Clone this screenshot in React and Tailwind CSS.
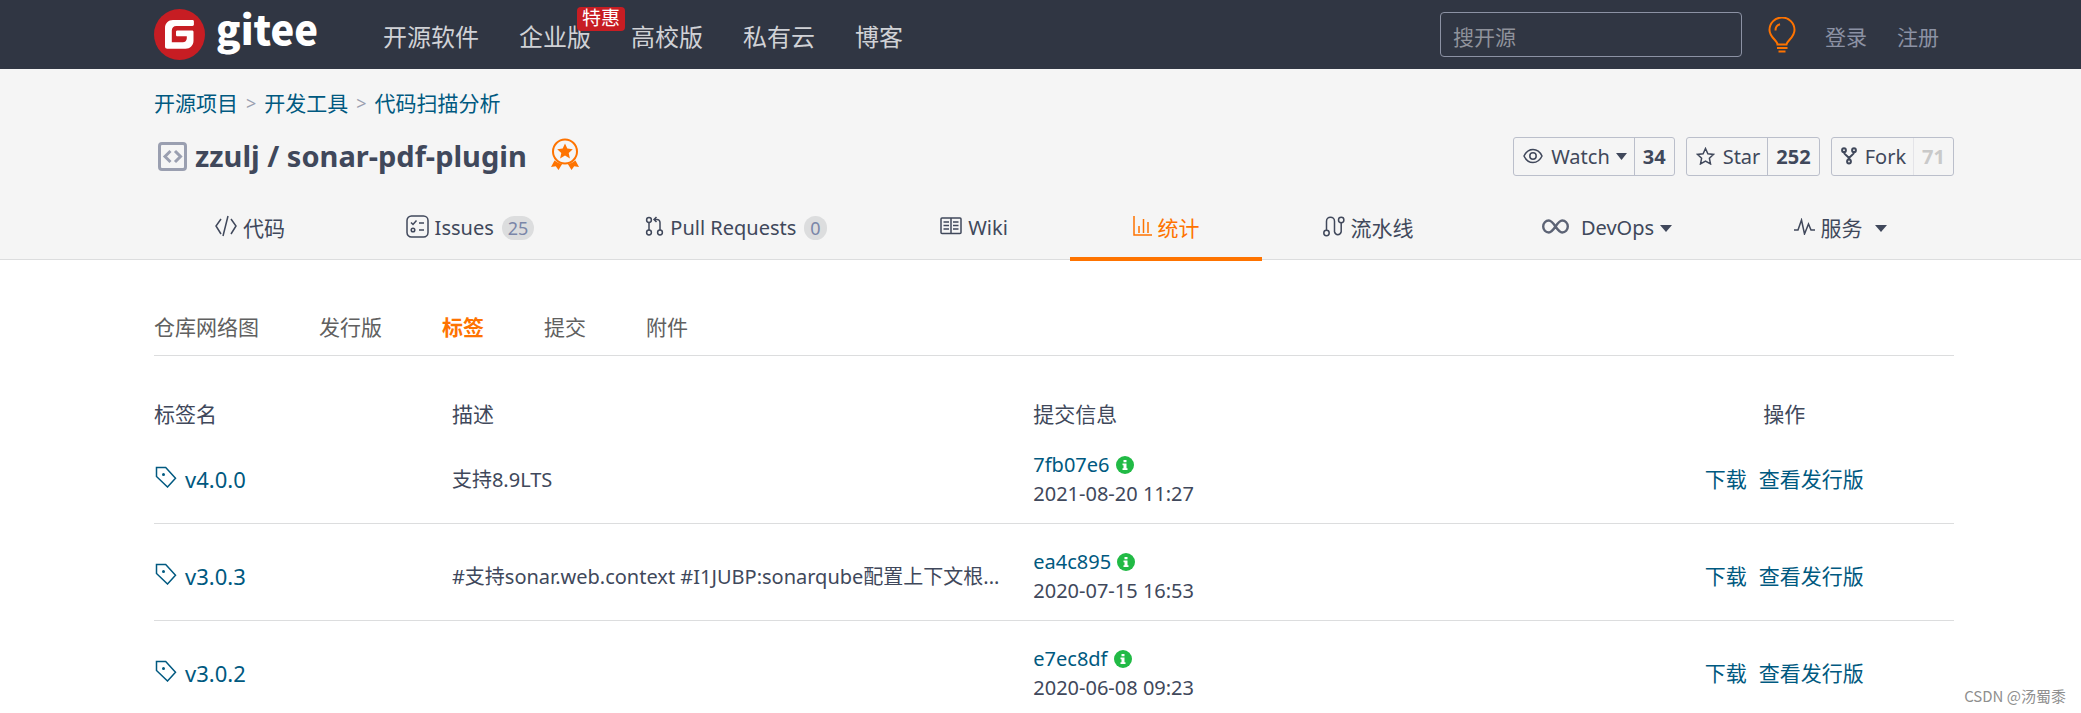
const LATIN = "font-['Noto_Sans','Noto_Sans_CJK_SC',sans-serif]";

function Icon({ w, h, box, sw = 1.5, className = '', children }) {
  return (
    <svg
      width={w}
      height={h}
      viewBox={box || `0 0 ${w} ${h}`}
      fill="none"
      stroke="currentColor"
      strokeWidth={sw}
      className={`shrink-0 ${className}`}
      aria-hidden="true"
    >
      {children}
    </svg>
  );
}

function Caret({ w = 11, h = 7 }) {
  return (
    <svg width={w} height={h} viewBox="0 0 12 7" preserveAspectRatio="none" className="shrink-0" aria-hidden="true">
      <path d="M0 0h12L6 7z" fill="currentColor" />
    </svg>
  );
}

const CodeIcon = () => (
  <Icon w={22} h={22}>
    <path d="M6 4 1 11l5 8M16 4l5 7-5 8M13 1 8 21" />
  </Icon>
);

const IssuesIcon = () => (
  <Icon w={23} h={23}>
    <rect x="1" y="1" width="21" height="21" rx="4.5" />
    <path d="m5 7.5 2 2 3.5-4M13 8h5M13 15h5" />
    <circle cx="7" cy="15" r="1.8" />
  </Icon>
);

const PullIcon = () => (
  <Icon w={19} h={20}>
    <circle cx="4" cy="4" r="2.4" />
    <circle cx="4" cy="16.5" r="2.4" />
    <circle cx="15" cy="16.5" r="2.4" />
    <path d="M4 6.500v7.500M15 14V6.500a3 3 0 0 0-3-3H9.500M11.500 1 9 3.500 11.500 6" />
  </Icon>
);

const WikiIcon = () => (
  <Icon w={22} h={18}>
    <rect x="1" y="1" width="20" height="15.500" rx="1" />
    <path d="M11 1v15.500M3.500 5H9M3.500 8.500H9M3.500 12H9M13 5h5.500M13 8.500h5.500M13 12h5.500" />
  </Icon>
);

const StatsIcon = () => (
  <Icon w={19} h={20}>
    <path d="M1 0v19h18M6 17V10M10.500 17V3M15 17V6" />
  </Icon>
);

const PipelineIcon = () => (
  <Icon w={22} h={21}>
    <circle cx="3.500" cy="17" r="2.700" />
    <circle cx="18.200" cy="4" r="2.700" />
    <path d="M3.500 14.300V5.200a4 4 0 0 1 8 0v10.600a3.500 4 0 0 0 6.700 0V6.700" />
  </Icon>
);

const InfinityIcon = () => (
  <Icon w={27} h={15} sw={2.4} className="text-[#5c6375]">
    <path d="M13.500 7.500C11 3.800 9.300 1.500 6.800 1.500a5.600 6 0 0 0 0 12c2.500 0 4.200-2.300 6.700-6s4.200-6 6.700-6a5.600 6 0 0 1 0 12c-2.500 0-4.200-2.300-6.700-6z" />
  </Icon>
);

const PulseIcon = () => (
  <Icon w={21} h={17}>
    <path d="M0 12h4L7.500 2l3 14 4-10 2.500 6h4" />
  </Icon>
);

const TagIcon = () => (
  <Icon w={22} h={22}>
    <path d="M1.500 1.500h9.200L20.500 12.300 12.500 21 1.500 10.500z" />
    <circle cx="8.500" cy="8.500" r="1.500" fill="currentColor" stroke="none" />
  </Icon>
);

const InfoIcon = () => (
  <svg width="18" height="18" viewBox="0 0 18 18" className="shrink-0" aria-hidden="true">
    <circle cx="9" cy="9" r="9" fill="#21ba45" />
    <path d="M7.500 4h3v2.300h-3zM6.500 7.500h4v4.700h1v1.800h-5v-1.800h1V9.200h-1z" fill="#fff" />
  </svg>
);

const navLinks = ['开源软件', '企业版', '高校版', '私有云', '博客'];

function Header() {
  return (
    <header className="flex h-[69px] items-center bg-[#303643] pl-[154px] pr-[142px]">
      <a href="#" className="flex items-center gap-[11px] text-white">
        <svg width="51" height="51" viewBox="0 0 51 51" aria-hidden="true">
          <circle cx="25.500" cy="25.500" r="25.500" fill="#c71d23" />
          <path
            d="M38.500 11H19c-4.600 0-8 3.400-8 8v18.500c0 1.300 1 2.300 2.300 2.300h18.200c4.500 0 8-3.500 8-8V22.800c0-.8-.6-1.400-1.400-1.400H23.400c-.8 0-1.400.6-1.400 1.400v3.100c0 .8.600 1.400 1.400 1.400h9.400v1.900c0 2.300-1.700 4.100-4 4.100H17.800V21.400c0-2.500 1.900-4.400 4.400-4.400h16.300c.8 0 1.400-.6 1.400-1.400v-3.200c0-.8-.6-1.400-1.400-1.400z"
            fill="#fff"
          />
        </svg>
        <span className="mb-[14px] h-10 font-['Noto_Sans_CJK_SC',sans-serif] text-[40px] leading-10 font-black">gitee</span>
      </a>
      <nav className="ml-[65px] flex gap-10 pt-[5px] text-[24px] leading-[32px] text-[#d0d2d6]">
        {navLinks.map((t) => (
          <a href="#" key={t} className="relative">
            {t}
            {t === '企业版' && (
              <span className="absolute -top-[14px] left-[58px] h-6 rounded bg-[#c71d23] px-[5px] text-[19px] leading-[23px] whitespace-nowrap text-white">
                特惠
              </span>
            )}
          </a>
        ))}
      </nav>
      <input
        type="search"
        aria-label="搜开源"
        placeholder="搜开源"
        className="ml-auto h-[45px] w-[302px] rounded border border-[#8c92a4] bg-transparent px-3 pt-1 text-[21px] text-white placeholder:text-[#8f929b]"
      />
      <Icon w={28} h={36} sw={2} className="ml-[26px] text-[#fe7300]">
        <path d="M9.500 27.500c0-4-8-7-8-14.500a12.300 12.300 0 0 1 25 0c0 7.500-7.500 10.500-8 14.500zM7.500 13.500c0-3.500 2-5.500 4.500-6.200" />
        <path d="M9 31h10.500M10.500 34.500h7" />
      </Icon>
      <div className="ml-[29px] flex gap-[30px] pt-[5px] text-[21px] leading-[30px] text-[#8c92a4]">
        <a href="#">登录</a>
        <a href="#">注册</a>
      </div>
    </header>
  );
}

function CountButton({ icon, label, count, caret, muted }) {
  return (
    <div className="flex h-[39px] items-stretch rounded-[3px] border border-[#bbbfcb] text-[20px] leading-[37px]">
      <button
        type="button"
        className={`flex items-center gap-2 border-r pr-[7px] pl-[9px] ${muted ? 'border-[#e4e4e8]' : 'border-[#bbbfcb]'}`}
      >
        {icon}
        <span className="flex items-center gap-[6px]">
          {label}
          {caret && <Caret />}
        </span>
      </button>
      <a href="#" className={`px-2 font-bold ${muted ? 'text-[#c9c9c9]' : ''}`}>
        {count}
      </a>
    </div>
  );
}

const tabs = [
  { label: '代码', icon: <CodeIcon /> },
  { label: 'Issues', icon: <IssuesIcon />, count: 25 },
  { label: 'Pull Requests', icon: <PullIcon />, count: 0 },
  { label: 'Wiki', icon: <WikiIcon /> },
  { label: '统计', icon: <StatsIcon />, active: true },
  { label: '流水线', icon: <PipelineIcon /> },
  { label: 'DevOps', icon: <InfinityIcon />, caret: true, wide: true },
  { label: '服务', icon: <PulseIcon />, caret: true },
];

function isLatin(t) {
  return /^[A-Z]/.test(t);
}

function ProjectHead() {
  const crumbs = ['开源项目', '开发工具', '代码扫描分析'];
  return (
    <section className="border-b border-[#dcddde] bg-[#f5f5f5] pr-[127px] pl-[154px]">
      <nav className="flex items-center gap-2 pt-[19px] text-[21px] leading-[30px] text-[#005980]">
        {crumbs.map((c, i) => (
          <span key={c} className="flex items-center gap-2">
            {i > 0 && <span className="text-[18px] text-[#9a9fb0]">&gt;</span>}
            <a href="#">{c}</a>
          </span>
        ))}
      </nav>
      <div className="flex items-center pt-[18px]">
        <h1 className="flex items-center gap-2 pl-1 text-[29px] leading-10 font-bold">
          <Icon w={29} h={29} sw={3} className="text-[#9a9fb0]">
            <rect x="1.500" y="1.500" width="26" height="26" rx="2.500" />
            <path d="M12.500 9 7 14.500l5.500 5.500M17 9l5.500 5.500L17 20" />
          </Icon>
          <a href="#">zzulj / sonar-pdf-plugin</a>
        </h1>
        <svg width="28" height="32" viewBox="0 0 28 32" className="mb-1 ml-6 text-[#fe7300]" aria-hidden="true">
          <circle cx="14" cy="13.500" r="12" fill="none" stroke="currentColor" strokeWidth="2" />
          <path d="m14 5.500 2.300 5.100 5.500.6-4.100 3.700 1.200 5.500-4.900-2.800-4.900 2.800 1.200-5.500-4.100-3.700 5.500-.6z" fill="currentColor" />
          <path d="M3.500 22.500 0 29l4.800-.7L7.500 32l3.800-6.200a13 13 0 0 1-7.800-3.300zM24.500 22.500 28 29l-4.800-.7-2.700 3.700-3.800-6.200a13 13 0 0 0 7.800-3.300z" fill="currentColor" />
        </svg>
        <div className="ml-auto flex gap-[11px]">
          <CountButton
            label="Watch"
            count="34"
            caret
            icon={
              <Icon w={20} h={16}>
                <path d="M1 8c2-4.300 5-6.500 9-6.500S17 3.700 19 8c-2 4.300-5 6.500-9 6.500S3 12.300 1 8z" />
                <circle cx="10" cy="8" r="3.200" />
              </Icon>
            }
          />
          <CountButton
            label="Star"
            count="252"
            icon={
              <Icon w={19} h={18}>
                <path d="m9.500 1.500 2.400 5.200 5.700.7-4.200 3.900 1.100 5.600-5-2.800-5 2.800 1.100-5.600L1.400 7.400l5.700-.7z" />
              </Icon>
            }
          />
          <CountButton
            label="Fork"
            count="71"
            muted
            icon={
              <Icon w={16} h={18} sw={2}>
                <circle cx="3" cy="3.200" r="1.900" />
                <circle cx="13" cy="3.200" r="1.900" />
                <circle cx="8" cy="14.500" r="1.900" />
                <path d="M3 5.200c0 3.600 5 2.800 5 7.300M13 5.200c0 3.600-5 2.800-5 7.300" />
              </Icon>
            }
          />
        </div>
      </div>
      <nav className="-mb-[2px] grid grid-cols-[192fr_248fr_284fr_192fr_192fr_212fr_266fr_214fr] pt-[17px]">
        {tabs.map((t) => (
          <a
            href="#"
            key={t.label}
            className={`flex h-[68px] items-center justify-center gap-[6px] border-b-4 pt-[10px] pb-1 text-[21px] leading-[30px] whitespace-nowrap last:pr-[14px] ${
              t.active ? 'border-[#fe7300] text-[#fe7300]' : 'border-transparent'
            }`}
          >
            <span className={`mb-1 ${t.wide ? 'mr-[6px]' : ''}`}>{t.icon}</span>
            <span className={isLatin(t.label) ? 'text-[20px]' : ''}>{t.label}</span>
            {t.count !== undefined && (
              <span className="ml-[2px] rounded-full bg-[#dcddde] px-[6px] text-[18px] leading-6 text-[#7a86a8]">{t.count}</span>
            )}
            {t.caret && (
              <span className={t.wide ? '' : 'ml-[6px]'}>
                <Caret w={12} h={7} />
              </span>
            )}
          </a>
        ))}
      </nav>
    </section>
  );
}

const rows = [
  { tag: 'v4.0.0', desc: '支持8.9LTS', sha: '7fb07e6', date: '2021-08-20 11:27' },
  {
    tag: 'v3.0.3',
    desc: '#支持sonar.web.context #I1JUBP:sonarqube配置上下文根...',
    sha: 'ea4c895',
    date: '2020-07-15 16:53',
  },
  { tag: 'v3.0.2', desc: '', sha: 'e7ec8df', date: '2020-06-08 09:23' },
];

const subTabs = ['仓库网络图', '发行版', '标签', '提交', '附件'];

function Tags() {
  return (
    <main className="pr-[127px] pl-[154px]">
      <nav className="flex gap-[60px] border-b border-[#dcddde] pt-[52px] pb-3 text-[21px] leading-[31px] text-[#606060]">
        {subTabs.map((t) => (
          <a href="#" key={t} className={t === '标签' ? 'font-bold text-[#fe7300]' : ''}>
            {t}
          </a>
        ))}
      </nav>
      <table className="w-full table-fixed text-left">
        <colgroup>
          <col className="w-[16.55%]" />
          <col className="w-[32.3%]" />
          <col className="w-[32.3%]" />
          <col />
        </colgroup>
        <thead>
          <tr className="text-[21px] leading-[26px]">
            <th className="pt-[45px] font-normal">标签名</th>
            <th className="pt-[45px] font-normal">描述</th>
            <th className="pt-[45px] font-normal">提交信息</th>
            <th className="pt-[45px] text-center font-normal">操作</th>
          </tr>
        </thead>
        <tbody>
          {rows.map((r) => (
            <tr key={r.tag} className="group border-b border-[#dcddde] text-[20px] leading-[29px] last:border-0">
              <td className="pt-[23px] pb-[15px] group-last:pb-0">
                <a href="#" className="flex items-center gap-2 text-[22px] text-[#005980]">
                  <span className="mb-1 ml-px">
                    <TagIcon />
                  </span>
                  {r.tag}
                </a>
              </td>
              <td className="truncate pt-[23px] pb-[15px] group-last:pb-0">{r.desc}</td>
              <td className="pt-[23px] pb-[15px] group-last:pb-0">
                <span className="flex items-center gap-[6px]">
                  <a href="#" className="text-[#005980]">
                    {r.sha}
                  </a>
                  <InfoIcon />
                </span>
                {r.date}
              </td>
              <td className="pt-[23px] pb-[15px] text-[21px] group-last:pb-0">
                <span className="flex justify-center gap-3 text-[#005980]">
                  <a href="#">下载</a>
                  <a href="#">查看发行版</a>
                </span>
              </td>
            </tr>
          ))}
        </tbody>
      </table>
    </main>
  );
}

export default function App() {
  return (
    <div className={`relative min-h-screen bg-white text-[#40485b] ${LATIN}`}>
      <Header />
      <ProjectHead />
      <Tags />
      <p className="absolute right-[15px] bottom-[5px] font-['Noto_Sans_CJK_SC',sans-serif] text-[15px] leading-6 text-[#8f8f8f]">
        CSDN @汤蜀黍
      </p>
    </div>
  );
}
